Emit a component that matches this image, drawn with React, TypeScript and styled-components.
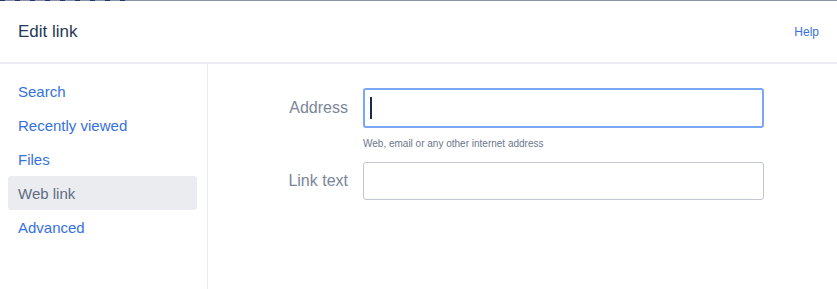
import React from "react";
import styled, { createGlobalStyle } from "styled-components";

const GlobalStyle = createGlobalStyle`
	html, body {
		margin: 0;
		padding: 0;
		background: #ffffff;
	}
	body {
		font-family: "Liberation Sans", Arial, sans-serif;
	}
`;

const Dialog = styled.div`
	width: 837px;
	height: 289px;
	display: flex;
	flex-direction: column;
	background: #ffffff;
	border-top: 1px solid #8993a4;
	box-sizing: border-box;
	position: relative;
`;

const TopDashes = styled.div`
	position: absolute;
	top: -1px;
	left: 0;
	width: 125px;
	height: 1px;
	background: repeating-linear-gradient(
		to right,
		#1d3a6e 0px,
		#1d3a6e 5px,
		transparent 5px,
		transparent 15px
	);
`;

const Header = styled.header`
	height: 61px;
	display: flex;
	align-items: center;
	justify-content: space-between;
	padding: 0 18px;
	border-bottom: 2px solid #ebecf0;
	flex-shrink: 0;
`;

const Title = styled.h1`
	margin: 0;
	font-size: 17px;
	font-weight: 400;
	color: #253858;
`;

const HelpLink = styled.a`
	font-size: 12px;
	color: #3572e0;
	text-decoration: none;
`;

const Body = styled.div`
	flex: 1;
	display: flex;
	min-height: 0;
`;

const Sidebar = styled.nav`
	width: 208px;
	border-right: 1px solid #ebecf0;
	padding: 10px 10px 0 8px;
	box-sizing: border-box;
	display: flex;
	flex-direction: column;
	flex-shrink: 0;
`;

const NavItem = styled.a<{ $active?: boolean }>`
	display: flex;
	align-items: center;
	height: 34px;
	padding-left: 10px;
	border-radius: 3px;
	font-size: 15px;
	text-decoration: none;
	color: ${(p) => (p.$active ? "#5e6c84" : "#3572e0")};
	background: ${(p) => (p.$active ? "#ebecf0" : "transparent")};
`;

const Main = styled.main`
	flex: 1;
	padding-top: 24px;
`;

const Form = styled.div`
	display: grid;
	grid-template-columns: 140px 401px;
	column-gap: 15px;
	align-items: center;
`;

const Label = styled.label`
	text-align: right;
	font-size: 16px;
	color: #7a869a;
`;

const Field = styled.div<{ $focused?: boolean }>`
	position: relative;
	box-sizing: border-box;
	height: ${(p) => (p.$focused ? "40px" : "38px")};
	border: ${(p) => (p.$focused ? "2px solid #7aa7f7" : "1px solid #c1c7d0")};
	border-radius: 3px;
	background: #ffffff;
`;

const Caret = styled.span`
	position: absolute;
	left: 5px;
	top: 7px;
	width: 1.5px;
	height: 22px;
	background: #172b4d;
`;

const Hint = styled.div`
	grid-column: 2;
	font-size: 10px;
	color: #6b778c;
	margin: 10px 0 12px;
	line-height: 12px;
`;

const navItems = ["Search", "Recently viewed", "Files", "Web link", "Advanced"];

export default function App() {
	return (
		<>
			<GlobalStyle />
			<Dialog>
				<TopDashes />
				<Header>
					<Title>Edit link</Title>
					<HelpLink href="#">Help</HelpLink>
				</Header>
				<Body>
					<Sidebar>
						{navItems.map((item) => (
							<NavItem key={item} href="#" $active={item === "Web link"}>
								{item}
							</NavItem>
						))}
					</Sidebar>
					<Main>
						<Form>
							<Label>Address</Label>
							<Field $focused>
								<Caret />
							</Field>
							<Hint>Web, email or any other internet address</Hint>
							<Label>Link text</Label>
							<Field />
						</Form>
					</Main>
				</Body>
			</Dialog>
		</>
	);
}
